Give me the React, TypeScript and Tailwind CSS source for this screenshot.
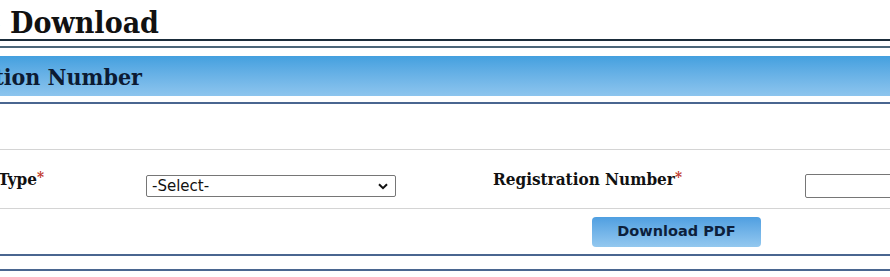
const serif = { fontFamily: '"DejaVu Serif Condensed", "DejaVu Serif", serif', fontStretch: 'condensed' } as const;
const sans = { fontFamily: '"DejaVu Sans", Verdana, sans-serif' } as const;

const Star = () => <span className="text-[#c0392b] align-top text-[15px] leading-[16px]">*</span>;

export default function App() {
  return (
    <div className="h-[277px] w-[890px] overflow-hidden bg-white">
      {/* page title */}
      <div className="flex h-[39px] pt-[5px]">
        <div className="flex w-[159px] shrink-0 justify-end whitespace-nowrap">
          <h1 className="text-[30px] font-bold leading-[35px] text-[#111]" style={serif}>
            Certificate Download
          </h1>
        </div>
      </div>
      <div className="h-[2px] bg-[#1b2d3b]" />
      <div className="mt-[5px] h-[2px] bg-[#4b6679]" />

      {/* section header */}
      <div className="mt-[8px] flex h-[40px] bg-gradient-to-b from-[#43a0df] to-[#8dc5ee] pt-px">
        <div className="flex w-[142px] shrink-0 justify-end whitespace-nowrap">
          <h2 className="text-[23px] font-bold leading-[40px] text-[#0c1b33]" style={serif}>
            Search by Registration Number
          </h2>
        </div>
      </div>
      <div className="mt-[6px] h-[2px] bg-[#4a6690]" />

      <div className="mt-[45px] h-px bg-[#d4d4d4]" />

      {/* form row */}
      <div className="flex h-[58px] items-start">
        <div className="mt-[19px] flex w-[146px] shrink-0 leading-[20px]">
          <div className="flex w-[44px] justify-end whitespace-nowrap">
            <label className="block text-[17px] font-bold leading-[20px] text-[#111]" style={serif}>
              Vehicle Type<Star />
            </label>
          </div>
        </div>
        <div className="relative mt-[25px] w-[250px] shrink-0 leading-[20px]">
          <select
            className="block h-[22px] w-full appearance-none rounded-[2px] border border-[#767676] bg-white pl-[5px] text-[15px] leading-[20px] text-[#111]"
            style={sans}
            defaultValue=""
          >
            <option value="">-Select-</option>
          </select>
          <svg className="pointer-events-none absolute right-[8px] top-[8px]" width="10" height="7" viewBox="0 0 10 7">
            <path d="M1 1.2 L5 5.2 L9 1.2" fill="none" stroke="#111" strokeWidth="2" />
          </svg>
        </div>
        <div className="w-[97px] shrink-0" />
        <div className="mt-[19px] w-[312px] shrink-0 whitespace-nowrap leading-[20px]">
          <label className="block text-[17px] font-bold leading-[20px] text-[#111]" style={serif}>
            Registration Number<Star />
          </label>
        </div>
        <input
          className="mt-[24px] block h-[24px] w-[120px] shrink-0 rounded-[2px] border border-[#767676] bg-white"
          type="text"
        />
      </div>
      <div className="h-px bg-[#d4d4d4]" />

      {/* action */}
      <div className="flex h-[45px] items-start pt-[8px]">
        <div className="w-[592px] shrink-0" />
        <button
          className="h-[30px] w-[169px] rounded-[4px] bg-gradient-to-b from-[#4f9fe1] to-[#93c8ef] text-[14.5px] font-bold text-[#0d1f3c]"
          style={sans}
        >
          Download PDF
        </button>
      </div>
      <div className="h-[2px] bg-[#4a6690]" />
      <div className="mt-[13px] h-[2px] bg-[#4a6690]" />
    </div>
  );
}
